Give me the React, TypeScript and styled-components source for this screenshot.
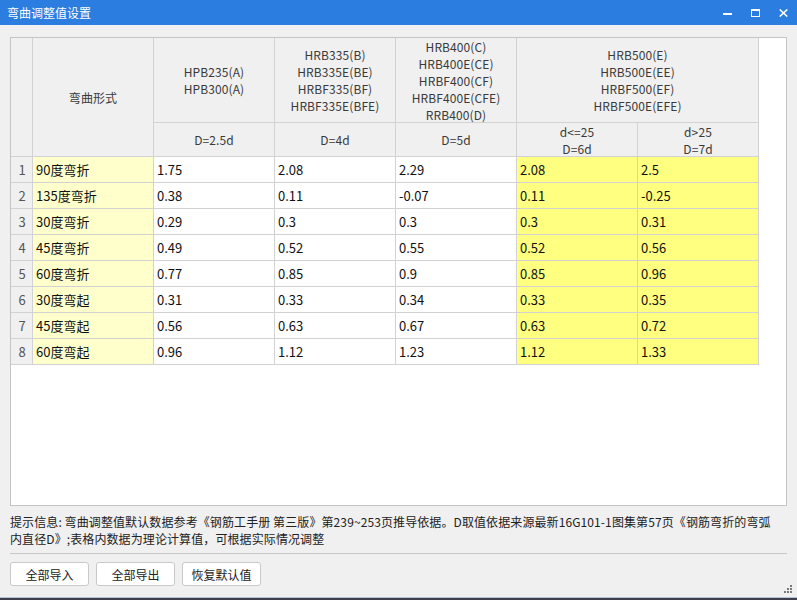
import React from 'react'
import styled, { createGlobalStyle } from 'styled-components'

const rows = [
  { name: '90度弯折', v: ['1.75', '2.08', '2.29', '2.08', '2.5'] },
  { name: '135度弯折', v: ['0.38', '0.11', '-0.07', '0.11', '-0.25'] },
  { name: '30度弯折', v: ['0.29', '0.3', '0.3', '0.3', '0.31'] },
  { name: '45度弯折', v: ['0.49', '0.52', '0.55', '0.52', '0.56'] },
  { name: '60度弯折', v: ['0.77', '0.85', '0.9', '0.85', '0.96'] },
  { name: '30度弯起', v: ['0.31', '0.33', '0.34', '0.33', '0.35'] },
  { name: '45度弯起', v: ['0.56', '0.63', '0.67', '0.63', '0.72'] },
  { name: '60度弯起', v: ['0.96', '1.12', '1.23', '1.12', '1.33'] },
]

const GlobalStyle = createGlobalStyle`
  html, body {
    margin: 0;
    padding: 0;
    background: #3a3f4a;
  }
  * {
    box-sizing: border-box;
  }
`

function App() {
  return (
    <Window>
      <GlobalStyle />
      <TitleBar>
        <Title>弯曲调整值设置</Title>
        <Controls>
          <CtrlButton>
            <svg width="9" height="9" viewBox="0 0 9 9">
              <rect x="0" y="5" width="9" height="2" fill="#fff" />
            </svg>
          </CtrlButton>
          <CtrlButton>
            <svg width="9" height="8" viewBox="0 0 9 8">
              <rect x="0.5" y="0.5" width="8" height="7" fill="none" stroke="#fff" />
              <rect x="0" y="0" width="9" height="2" fill="#fff" />
            </svg>
          </CtrlButton>
          <CtrlButton>
            <svg width="9" height="8" viewBox="0 0 9 8">
              <path d="M0.7 0.5 L8.3 7.5 M8.3 0.5 L0.7 7.5" stroke="#fff" strokeWidth="1.6" />
            </svg>
          </CtrlButton>
        </Controls>
      </TitleBar>
      <Body>
        <TableBox>
          <Grid>
            <Head style={{ gridRow: '1 / 3', gridColumn: '1' }} />
            <Head style={{ gridRow: '1 / 3', gridColumn: '2' }}>弯曲形式</Head>
            <Head>HPB235(A)<br />HPB300(A)</Head>
            <Head>HRB335(B)<br />HRB335E(BE)<br />HRBF335(BF)<br />HRBF335E(BFE)</Head>
            <Head>HRB400(C)<br />HRB400E(CE)<br />HRBF400(CF)<br />HRBF400E(CFE)<br />RRB400(D)</Head>
            <Head style={{ gridColumn: '6 / 8' }}>HRB500(E)<br />HRB500E(EE)<br />HRBF500(EF)<br />HRBF500E(EFE)</Head>
            <Head>D=2.5d</Head>
            <Head>D=4d</Head>
            <Head>D=5d</Head>
            <Head>d&lt;=25<br />D=6d</Head>
            <Head>d&gt;25<br />D=7d</Head>
            {rows.map((r, i) => (
              <React.Fragment key={r.name}>
                <RowNum>{i + 1}</RowNum>
                <Cell $tone="label">{r.name}</Cell>
                {r.v.map((v, j) => (
                  <Cell key={j} $tone={j >= 3 ? 'hot' : 'plain'}>{v}</Cell>
                ))}
              </React.Fragment>
            ))}
          </Grid>
        </TableBox>
        <Info>
          提示信息: 弯曲调整值默认数据参考《钢筋工手册 第三版》第239~253页推导依据。D取值依据来源最新16G101-1图集第57页《钢筋弯折的弯弧
          <br />
          内直径D》;表格内数据为理论计算值，可根据实际情况调整
        </Info>
        <Separator />
        <Buttons>
          <Button>全部导入</Button>
          <Button>全部导出</Button>
          <Button>恢复默认值</Button>
        </Buttons>
      </Body>
      <Grip width="10" height="10" viewBox="0 0 10 10">
        <rect x="6" y="0" width="2" height="2" fill="#7a7a7a" />
        <rect x="3" y="3" width="2" height="2" fill="#7a7a7a" />
        <rect x="6" y="3" width="2" height="2" fill="#7a7a7a" />
        <rect x="0" y="6" width="2" height="2" fill="#7a7a7a" />
        <rect x="3" y="6" width="2" height="2" fill="#7a7a7a" />
        <rect x="6" y="6" width="2" height="2" fill="#7a7a7a" />
      </Grip>
    </Window>
  )
}

const Window = styled.div`
  position: relative;
  width: 797px;
  height: 598px;
  background: #f0f0f0;
  border-bottom: 1px solid #b7c3d6;
  display: flex;
  flex-direction: column;
  font-family: "Noto Sans CJK SC", "Noto Sans", sans-serif;
  font-size: 12px;
  color: #222;
`

const TitleBar = styled.div`
  height: 25px;
  background: #2b7de0;
  display: flex;
  align-items: center;
  justify-content: space-between;
  padding-left: 7px;
`

const Title = styled.div`
  color: #fff;
  font-size: 12px;
  line-height: 25px;
`

const Controls = styled.div`
  display: flex;
  align-items: center;
  padding-right: 9px;
  gap: 19px;
`

const CtrlButton = styled.div`
  width: 9px;
  height: 9px;
  display: flex;
  align-items: center;
  justify-content: center;
`

const Body = styled.div`
  padding: 12px 10px 0 10px;
  display: flex;
  flex-direction: column;
`

const TableBox = styled.div`
  height: 469px;
  background: #fff;
  border: 1px solid #c4c4c4;
`

const Grid = styled.div`
  display: grid;
  grid-template-columns: 22px repeat(6, 121px);
  grid-template-rows: 85px 34px repeat(8, 26px);
  width: 748px;
`

const Head = styled.div`
  background: #f0f0f0;
  border-right: 1px solid #d2d2d2;
  border-bottom: 1px solid #d2d2d2;
  color: #3a3a3a;
  line-height: 17px;
  display: flex;
  align-items: center;
  justify-content: center;
  text-align: center;
  letter-spacing: 0.1px;
`

const RowNum = styled.div`
  background: #f0f0f0;
  border-right: 1px solid #d2d2d2;
  border-bottom: 1px solid #d2d2d2;
  color: #555;
  font-size: 13px;
  display: flex;
  align-items: center;
  justify-content: center;
  padding-left: 1px;
`

const toneBg: Record<string, string> = {
  label: '#ffffcc',
  hot: '#ffff80',
  plain: '#ffffff',
}

const Cell = styled.div<{ $tone: string }>`
  background: ${p => toneBg[p.$tone]};
  border-right: 1px solid #d2d2d2;
  border-bottom: 1px solid #d2d2d2;
  color: #111;
  font-size: 13px;
  display: flex;
  align-items: center;
  padding-left: 3px;
  white-space: nowrap;
`

const Info = styled.div`
  margin-top: 7px;
  line-height: 17px;
  color: #222;
  white-space: nowrap;
  letter-spacing: 0.1px;
`

const Separator = styled.div`
  margin-top: 6px;
  height: 1px;
  background: #c8c8c8;
`

const Buttons = styled.div`
  margin-top: 8px;
  display: flex;
  gap: 7px;
`

const Button = styled.button`
  width: 79px;
  height: 24px;
  background: #fff;
  border: 1px solid #c9c9c9;
  border-radius: 3px;
  font-family: inherit;
  font-size: 12px;
  color: #222;
  padding: 0;
`

const Grip = styled.svg`
  position: absolute;
  right: 3px;
  bottom: 2px;
`

export default App
